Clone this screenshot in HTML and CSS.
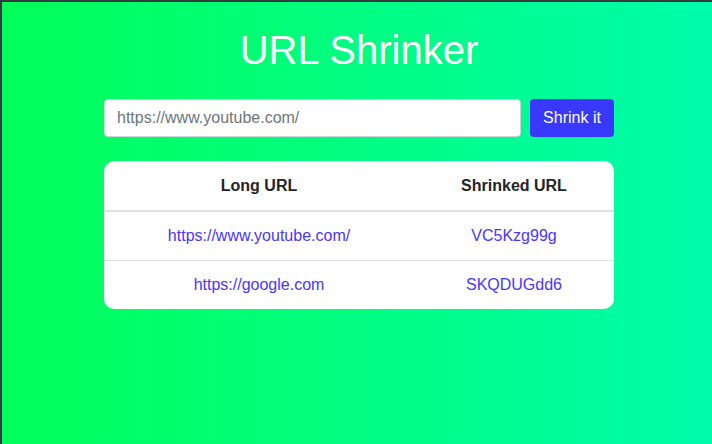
FILE: index.html
```html
<!DOCTYPE html>
<html>
<head>
<meta charset="utf-8">
<link rel="stylesheet" href="styles.css">
</head>
<body>
<main class="page">
  <h1 class="title">URL Shrinker</h1>
  <form class="shrink-form">
    <input class="url-input" type="text" placeholder="https://www.youtube.com/">
    <button class="shrink-btn" type="button">Shrink it</button>
  </form>
  <div class="table-card">
    <table class="url-table">
      <thead>
        <tr><th class="col-long">Long URL</th><th>Shrinked URL</th></tr>
      </thead>
      <tbody>
        <tr><td><a href="#">https://www.youtube.com/</a></td><td><a href="#">VC5Kzg99g</a></td></tr>
        <tr><td><a href="#">https://google.com</a></td><td><a href="#">SKQDUGdd6</a></td></tr>
      </tbody>
    </table>
  </div>
</main>
</body>
</html>
```

FILE: styles.css
```css
html, body {
  margin: 0;
  height: 100%;
}
body {
  box-sizing: border-box;
  border-top: 2px solid #373a3c;
  border-left: 2px solid #373a3c;
  background: linear-gradient(to right, #00ff58, #00fcab);
  font-family: "Liberation Sans", Arial, sans-serif;
  font-size: 16px;
  color: #212529;
}
.page {
  width: 510px;
  margin: 0 auto;
  padding: 24px 0 0 4px;
}
.title {
  margin: 0 0 25px;
  font-size: 40px;
  font-weight: 400;
  line-height: 48px;
  color: #fff;
  text-align: center;
}
.shrink-form {
  display: flex;
  gap: 9px;
  margin: 0 0 24px;
}
.url-input {
  flex: 1;
  box-sizing: border-box;
  height: 38px;
  padding: 6px 12px;
  border: 1px solid #ced4da;
  border-radius: 4px;
  font-family: inherit;
  font-size: 16px;
  color: #495057;
  background: #fff;
  outline: none;
}
.url-input::placeholder {
  color: #6c757d;
}
.shrink-btn {
  box-sizing: border-box;
  width: 84px;
  height: 38px;
  border: none;
  border-radius: 4px;
  background: #3838ff;
  color: #fff;
  font-family: inherit;
  font-size: 16px;
  padding: 0;
}
.table-card {
  background: #fff;
  border-radius: 10px;
  overflow: hidden;
}
.url-table {
  width: 100%;
  border-collapse: collapse;
  text-align: center;
}
.url-table th {
  padding: 13px 12px 12px;
  line-height: 24px;
  font-weight: 700;
  border-bottom: 2px solid #dee2e6;
}
.col-long {
  width: 286px;
}
.url-table td {
  padding: 12px;
  line-height: 24px;
}
.url-table tbody tr + tr td {
  border-top: 1px solid #dee2e6;
}
.url-table a {
  color: #4a35ff;
  text-decoration: none;
}
```
